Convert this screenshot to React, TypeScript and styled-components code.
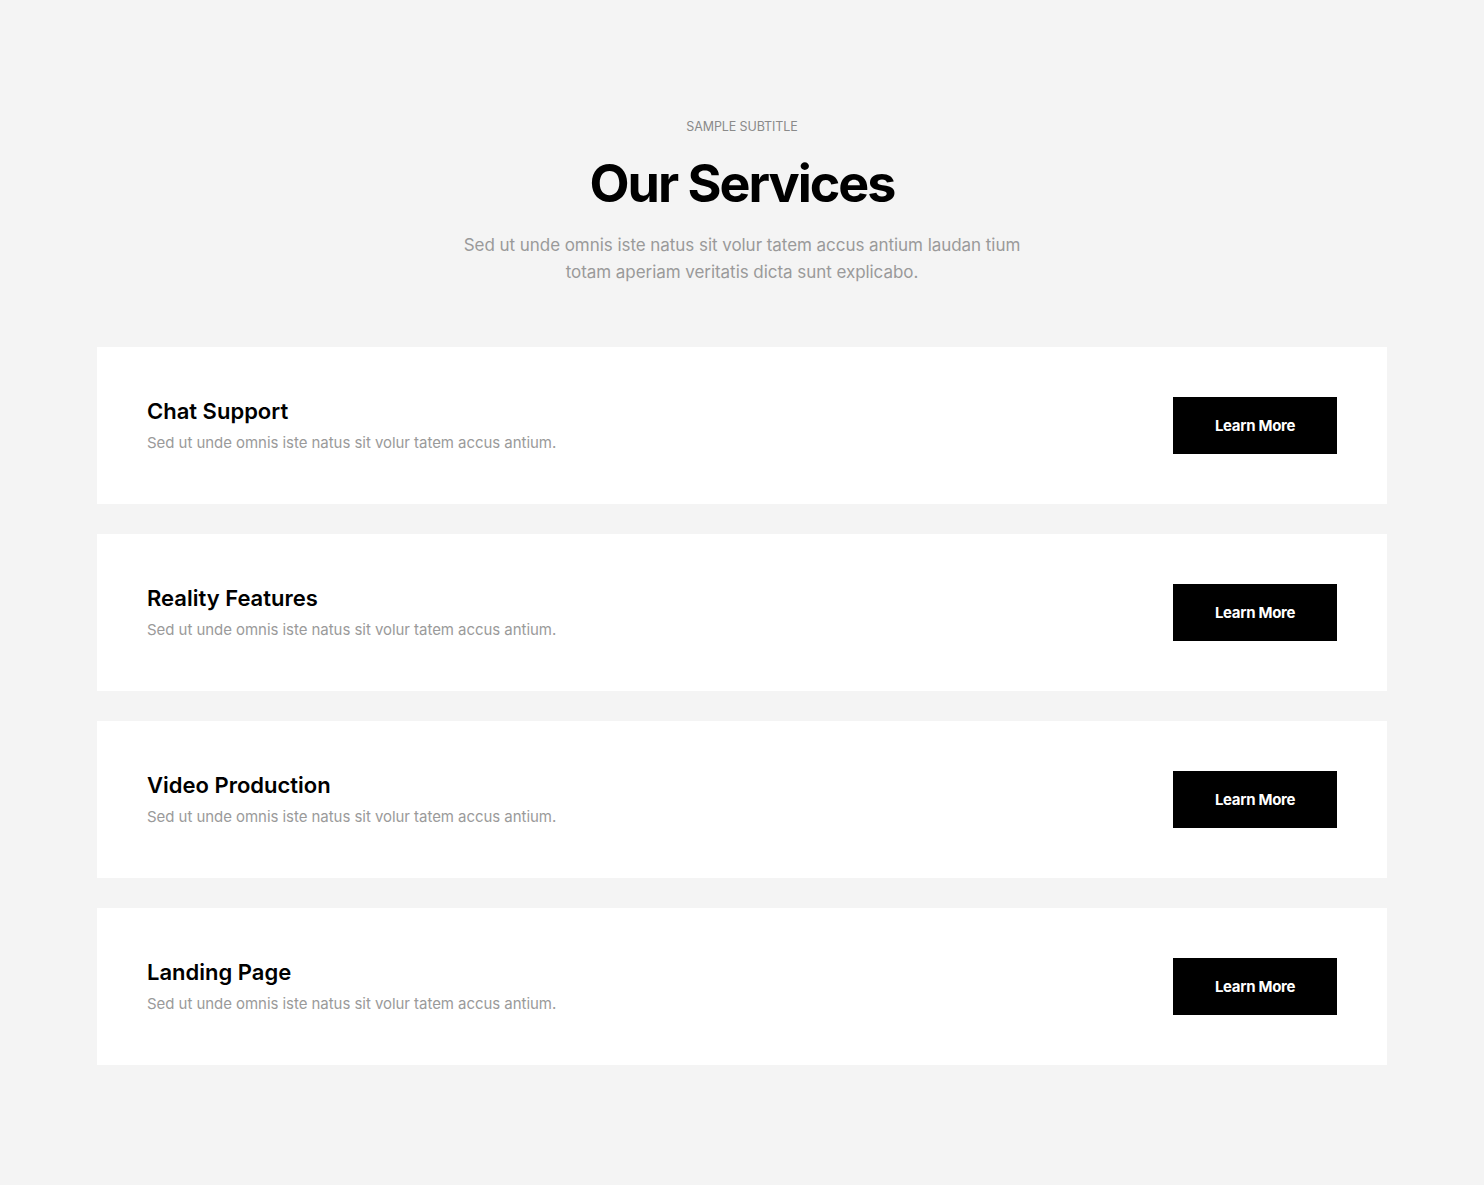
import React from "react";
import styled, { createGlobalStyle } from "styled-components";

const Global = createGlobalStyle`
  html, body { margin: 0; padding: 0; background: #f4f4f4; }
  body { font-family: Inter, "Noto Sans", sans-serif; -webkit-font-smoothing: antialiased; }
  * { box-sizing: border-box; }
`;

const Section = styled.section`
  padding: 119px 0 120px;
  background: #f4f4f4;
`;

const Header = styled.header`
  display: flex;
  flex-direction: column;
  align-items: center;
  text-align: center;
  margin-bottom: 61px;
`;

const Subtitle = styled.span`
  font-size: 12.5px;
  line-height: 16px;
  color: #8a8a8a;
  text-transform: uppercase;
  letter-spacing: -0.1px;
`;

const Title = styled.h2`
  margin: 16px 0 0;
  font-size: 52px;
  line-height: 66px;
  font-weight: 700;
  letter-spacing: -2px;
  color: #000;
`;

const Lead = styled.p`
  margin: 15px 0 0;
  max-width: 580px;
  font-size: 17px;
  line-height: 27px;
  color: #9a9a9a;
  letter-spacing: -0.05px;
`;

const List = styled.div`
  width: 1290px;
  margin: 0 auto;
  display: flex;
  flex-direction: column;
  gap: 30px;
`;

const Card = styled.div`
  background: #fff;
  padding: 50px;
  display: flex;
  align-items: center;
  justify-content: space-between;
`;

const Info = styled.div`
  display: flex;
  flex-direction: column;
  gap: 8px;
`;

const CardTitle = styled.h3`
  margin: 0;
  font-size: 22px;
  line-height: 26px;
  font-weight: 600;
  color: #000;
  letter-spacing: 0;
`;

const CardText = styled.p`
  margin: 0;
  font-size: 15px;
  line-height: 22px;
  color: #9a9a9a;
  letter-spacing: -0.05px;
`;

const Button = styled.a`
  display: flex;
  align-items: center;
  justify-content: center;
  flex: none;
  width: 164px;
  height: 57px;
  background: #000;
  color: #fff;
  font-size: 15px;
  font-weight: 700;
  letter-spacing: -0.3px;
  text-decoration: none;
`;

const services = ["Chat Support", "Reality Features", "Video Production", "Landing Page"];

export default function App() {
  return (
    <>
      <Global />
      <Section>
        <Header>
          <Subtitle>Sample Subtitle</Subtitle>
          <Title>Our Services</Title>
          <Lead>
            Sed ut unde omnis iste natus sit volur tatem accus antium laudan tium totam aperiam veritatis dicta sunt explicabo.
          </Lead>
        </Header>
        <List>
          {services.map((s) => (
            <Card key={s}>
              <Info>
                <CardTitle>{s}</CardTitle>
                <CardText>Sed ut unde omnis iste natus sit volur tatem accus antium.</CardText>
              </Info>
              <Button href="#">Learn More</Button>
            </Card>
          ))}
        </List>
      </Section>
    </>
  );
}
